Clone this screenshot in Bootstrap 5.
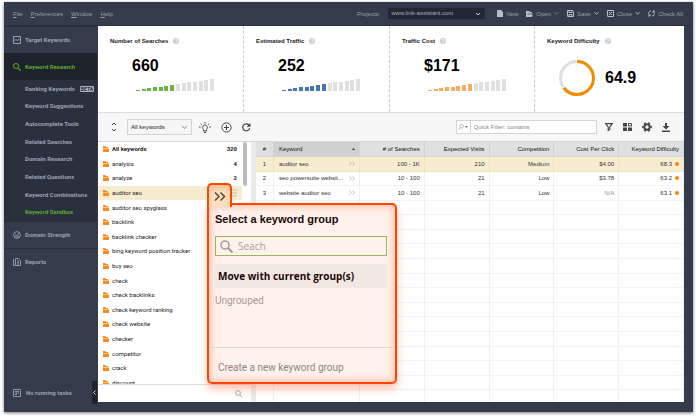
<!DOCTYPE html>
<html lang="en">
<head>
<meta charset="utf-8">
<meta name="viewport" content="width=device-width, initial-scale=1">
<title>Keyword Sandbox</title>
<link href="https://cdn.jsdelivr.net/npm/bootstrap@5.3.0/dist/css/bootstrap.min.css" rel="stylesheet">
<style>
body{background:#fff;font-family:Roboto,"Liberation Sans",sans-serif;font-size:6px;line-height:12px;color:#222}
.shell{padding:2px 3px 5px 4px}
.app-window{background:#343b4a;box-shadow:0 1px 3px #0008}
.topbar{height:24px;font-family:"Liberation Sans",sans-serif;color:#98a0ae;border-bottom:1px solid #2a303c}
.topbar a,.topbar button{color:#98a0ae}
.menus{padding-left:9px;gap:8px}
.menus a::first-letter{text-decoration:underline}
.plain{border:0;background:none;padding:0;line-height:12px;font-size:6px;display:inline-flex;align-items:center}
.project-pick{width:97px;height:11px;border:0;border-radius:0;background-color:#222733;color:#a9b0bc;font-size:6px;line-height:11px;padding:0 14px 0 3px;background-size:6px 6px;background-position:right 4px center;background-image:url("data:image/svg+xml,%3Csvg xmlns='http://www.w3.org/2000/svg' viewBox='0 0 6 6'%3E%3Cpath d='M1 2l2 2 2-2' fill='none' stroke='%23ccd'/%3E%3C/svg%3E")}
.actions{margin-left:12px;padding-right:10px}
.actions button{gap:3px}
.side{width:93px;flex:none;font-weight:700;color:#98a2b2}
.side a{color:inherit}
.side-item{height:27px;padding-left:9px;gap:4px;border-top:1px solid #292f3b}
.side-item svg,.tasks svg{width:8px;height:8px;flex:none}
.side-item.current{background:#1d222d;color:#5cab2c;border-color:#1d222d}
.side-menu{background:#2a303c;height:141px;padding-left:21px}
.side-menu .chosen{color:#5cab2c}
.beta{background:#a9b1c0;color:#2a303c;font-size:5px;line-height:6px;padding:0 1px;border-radius:1px;margin-left:5px}
.tasks{height:20px;padding-left:9px;gap:5px}
.collapse-tab{width:5px;height:23px;background:#1d222d;color:#fff}
.content-area{margin:0 9px 10px 1px;background:#fff;min-width:0}
.stats{display:grid;grid-template-columns:145fr 146fr 145fr 150fr;height:87px;border-bottom:1px solid #ddd;font-family:"Liberation Sans",sans-serif}
.stat{padding:9px 0 0 12px}
.stat+.stat{border-left:1px dashed #ccc}
.stat-title{font-weight:700;font-size:6px}
.help-dot{width:6px;height:6px;border-radius:50%;background:#ccc;color:#fff;font-size:5px;line-height:6px;text-align:center;margin-left:5px}
.figure-num{font-weight:700;font-size:16px;line-height:20px;color:#000}
.stat .figure-num{margin:9px 0 3px 22px}
.stat .ring-num{margin:0 0 0 10px}
.bars{width:78px;height:12px;margin-left:26px}
.bars i{width:4px;background:#e0e0e0}
.green .on{background:#6cb33f}.blue .on{background:#4575b6}.orange .on{background:#f6ad62}
.ring-row{padding:6px 0 0 12px}
.tools{height:29px;background:#f7f7f7;padding:0 14px 0 13px;border-bottom:1px solid #d5d5d5;font-family:"Liberation Sans",sans-serif}
.tools svg{display:block}
.group-pick{width:65px;height:16px;border:1px solid #d4d4d4;border-radius:0;font-size:6px;line-height:14px;padding:0 12px 0 3px;background-color:#f5f5f5;background-size:5px 5px;background-position:right 4px center;margin:0 7px 0 10px}
.quick{width:141px;height:14px;border:1px solid #d5d5d5;background:#fff}
.quick-kind{width:15px;border-right:1px solid #d5d5d5!important;color:#999;gap:1px;justify-content:center}
.quick input{border:0;border-radius:0;padding:0 3px;font-size:6px;line-height:12px;min-height:0}
.quick input::placeholder{color:#888}
.next-tool{margin-left:10px}
.groups{width:158px;flex:none}
.group-list{flex:1 1 0;min-height:0;overflow:hidden}
.group-grid{display:grid;grid-auto-rows:1fr;height:calc(100% + 6px);margin:0;padding:0;list-style:none}
.group-grid li{display:flex;align-items:center;padding:0 5px;gap:3px;margin-right:14px;line-height:12px}
.group-grid li b{margin-left:auto;font-weight:700}
.folder{width:6px;height:6px;flex:none}
.picked{background:#f6edd0}
.scroller{width:4px;height:44px;border-radius:2px;background:#bbb;right:9px;top:0}
.gutter{width:5px;background:#ebebeb;right:0;top:0;bottom:0}
.groups-foot{height:18px;border-top:1px solid #ddd;padding-right:13px}
.grid-area{min-width:0;overflow:hidden}
.kw{table-layout:fixed;width:100%;height:calc(100% + 3px);margin:0;font-family:"Liberation Sans",sans-serif;color:#333;border-collapse:separate;border-spacing:0}
.kw th,.kw td{padding:0 4px;line-height:12px;border-right:1px solid #f0f0f0;border-bottom:1px solid #f3f3f3;text-align:right;white-space:nowrap;overflow:hidden;vertical-align:middle}
.kw td{height:14px}
.kw thead th{height:15px;background:#e0e0e0;border-color:#d2d2d2;font-weight:400;color:#111}
.kw .c-key{text-align:left;padding-left:5px}
.kw thead .c-key{background:#d0d0d0}
.kw .c-num{text-align:center}
.kw .picked td{background:#f6edd0;border-color:#f0e4bf}
.lvl{display:inline-block;width:4px;height:4px;border-radius:50%;background:#f08a00;margin-left:3px}
.popup{left:109px;top:61px;width:190px;background:#fff1eb;border:2px solid #ff4500;border-radius:0 5px 5px 5px;box-shadow:inset 0 0 9px #ff450066,0 5px 9px #ff450055;color:#1c0808;z-index:2}
.popup-tab{left:-2px;top:-22px;width:25px;height:24px;background:#fde0bd;border:2px solid #ff4500;border-bottom:0;border-radius:5px 5px 0 0;justify-content:center;box-shadow:inset 0 4px 5px #ff450033}
.popup-main{padding:5px 8px 0 6px}
.popup-title{font:700 11px/18px "Liberation Sans",sans-serif;margin:0}
.popup-search{height:20px;border:1px solid #9ab564;margin:8px 0;padding-left:4px;gap:5px}
.popup-search input{border:0;background:none;padding:0;font:10px/16px "Open Sans",sans-serif;min-height:0}
.popup-search input::placeholder{color:#aaa09a}
.popup-band{background:#f3e7e2;font:700 10px/24px "Open Sans",sans-serif;padding-left:3px}
.popup-opt{font-size:10px;line-height:16px;color:#a49a95}
.popup-opt.first{padding:5px 0 38px}
.popup-foot{border-top:1px solid #e3d8d2;padding:12px 9px 6px}
.popup-foot .popup-opt{color:#8f857f}
</style>
</head>
<body>
<div class="shell vh-100 d-flex">
<div class="app-window flex-grow-1 d-flex flex-column">
<header class="topbar d-flex align-items-center flex-shrink-0">
  <nav class="menus d-flex"><a class="d-block text-decoration-none" href="#">File</a><a class="d-block text-decoration-none" href="#">Preferences</a><a class="d-block text-decoration-none" href="#">Window</a><a class="d-block text-decoration-none" href="#">Help</a></nav>
  <label class="ms-auto me-2" for="proj">Projects:</label>
  <select id="proj" class="form-select project-pick"><option>www.link-assistant.com</option></select>
  <div class="actions d-flex gap-2">
    <button class="plain"><svg width="6" height="7" viewBox="0 0 6 7"><path d="M0 0h4l2 2v5H0z" fill="#b8bec9"/></svg>New</button>
    <button class="plain"><svg width="7" height="6" viewBox="0 0 7 6"><path d="M0 0h3l1 1h2v1.500h1L6 6H0z" fill="#b8bec9"/><path d="M1.500 3H7" stroke="#343b4a" stroke-width=".7"/></svg>Open <svg width="5" height="3" viewBox="0 0 5 3"><path d="M.5.5l2 1.500 2-1.500" fill="none" stroke="#707887"/></svg></button>
    <button class="plain"><svg width="7" height="7" viewBox="0 0 7 7"><path d="M.5.500h5l1 1v5h-6zM2 .5v2h3v-2M2 6.500v-2h3v2" fill="none" stroke="#b8bec9"/></svg>Save <svg width="5" height="3" viewBox="0 0 5 3"><path d="M.5.5l2 1.500 2-1.500" fill="none" stroke="#b8bec9"/></svg></button>
    <button class="plain"><svg width="7" height="7" viewBox="0 0 7 7"><path d="M.5.500h6v6h-6zM2 2l3 3M5 2L2 5" fill="none" stroke="#b8bec9"/></svg>Close <svg width="5" height="3" viewBox="0 0 5 3"><path d="M.5.5l2 1.500 2-1.500" fill="none" stroke="#b8bec9"/></svg></button>
    <button class="plain"><svg width="7" height="7" viewBox="0 0 7 7"><path d="M3 1C0 1 0 5 2 6M0 6h2V4M4 6C7 6 7 2 5 1M7 1H5v2" fill="none" stroke="#b8bec9" stroke-width=".9"/></svg>Check All</button>
  </div>
</header>
<div class="d-flex flex-grow-1" style="min-height:0">
<aside class="side d-flex flex-column">
  <a href="#" class="side-item d-flex align-items-center text-decoration-none"><svg viewBox="0 0 8 8"><path d="M.5.500h7v7h-7zM1.500 4.500l1.500-1 1.500 1 2-1.500" fill="none" stroke="currentColor"/></svg>Target Keywords</a>
  <a href="#" class="side-item current d-flex align-items-center text-decoration-none"><svg viewBox="0 0 8 8"><circle cx="3" cy="3" r="2.500" fill="none" stroke="currentColor"/><path d="M5 5l2.700 2.700" stroke="currentColor" stroke-width="1.200"/></svg>Keyword Research</a>
  <nav class="side-menu d-flex flex-column justify-content-around">
    <a class="text-decoration-none d-flex align-items-center" href="#">Ranking Keywords<span class="beta">BETA</span></a><a class="text-decoration-none" href="#">Keyword Suggestions</a><a class="text-decoration-none" href="#">Autocomplete Tools</a><a class="text-decoration-none" href="#">Related Searches</a><a class="text-decoration-none" href="#">Domain Research</a><a class="text-decoration-none" href="#">Related Questions</a><a class="text-decoration-none" href="#">Keyword Combinations</a><a class="text-decoration-none chosen" href="#">Keyword Sandbox</a>
  </nav>
  <a href="#" class="side-item d-flex align-items-center text-decoration-none"><svg viewBox="0 0 8 8"><circle cx="4" cy="4" r="3.400" fill="none" stroke="currentColor" stroke-width=".9"/><path d="M2 3.500l2 1.500 2-3M2 6h4" fill="none" stroke="currentColor" stroke-width=".8"/></svg>Domain Strength</a>
  <a href="#" class="side-item d-flex align-items-center text-decoration-none"><svg viewBox="0 0 8 8"><path d="M2.500.500h3l2 2v5h-5zM.5 1v6.500H2M4 3h2M4 4.500h2M4 6h2" fill="none" stroke="currentColor" stroke-width=".9"/></svg>Reports</a>
  <div class="mt-auto mb-2 d-flex align-items-center justify-content-between">
    <div class="tasks d-flex align-items-center"><svg viewBox="0 0 8 8"><path d="M.5.500h7v7h-7zM2 2.500h4M2 4h4M2 5.500h2" fill="none" stroke="currentColor" stroke-width=".9"/></svg>No running tasks</div>
    <button class="plain collapse-tab justify-content-center" aria-label="Collapse sidebar"><svg width="3" height="5" viewBox="0 0 3 5"><path d="M2.500.5l-2 2 2 2" fill="none" stroke="#ddd"/></svg></button>
  </div>
</aside>
<main class="content-area flex-grow-1 d-flex flex-column">
  <section class="stats flex-shrink-0">
    <div class="stat"><div class="stat-title d-flex align-items-center">Number of Searches<span class="help-dot">?</span></div><div class="figure-num">660</div><div class="bars green d-flex align-items-end justify-content-between" data-on="7"></div></div>
    <div class="stat"><div class="stat-title d-flex align-items-center">Estimated Traffic<span class="help-dot">?</span></div><div class="figure-num">252</div><div class="bars blue d-flex align-items-end justify-content-between" data-on="8"></div></div>
    <div class="stat"><div class="stat-title d-flex align-items-center">Traffic Cost<span class="help-dot">?</span></div><div class="figure-num">$171</div><div class="bars orange d-flex align-items-end justify-content-between" data-on="8"></div></div>
    <div class="stat"><div class="stat-title d-flex align-items-center">Keyword Difficulty<span class="help-dot">?</span></div><div class="ring-row d-flex align-items-center"><svg width="36" height="50" viewBox="0 0 36 50"><g fill="none" stroke-width="3" transform="rotate(-90 18 25)"><circle cx="18" cy="25" r="16.500" stroke="#e0e0e0"/><circle cx="18" cy="25" r="16.500" stroke="#fff" pathLength="100" stroke-dasharray="67 33" stroke-dashoffset="1"/><circle cx="18" cy="25" r="16.500" stroke="#f08c00" pathLength="100" stroke-dasharray="64.900 35.100"/></g></svg><div class="figure-num ring-num">64.9</div></div></div>
  </section>
  <section class="tools d-flex align-items-center flex-shrink-0">
    <button class="plain" aria-label="Expand"><svg width="6" height="10" viewBox="0 0 6 10"><path d="M1 3l2-2 2 2M1 7l2 2 2-2" fill="none" stroke="#444"/></svg></button>
    <select class="form-select group-pick" aria-label="Group"><option>All keywords</option></select>
    <button class="plain" aria-label="Ideas"><svg width="12" height="11" viewBox="0 0 12 11"><path d="M4.500 7.500C3 6 3.500 3 6 3s3 3 1.500 4.500v1.500h-3zM5 10.500h2M6 0v1.500M1.800 1.800l1 1M10.200 1.800l-1 1M0 5h1.700M10.300 5H12" fill="none" stroke="#444"/></svg></button>
    <button class="plain next-tool" aria-label="Add"><svg width="11" height="11" viewBox="0 0 11 11"><circle cx="5.500" cy="5.500" r="4.600" fill="none" stroke="#444"/><path d="M5.500 3v5M3 5.500h5" stroke="#444"/></svg></button>
    <button class="plain next-tool" aria-label="Refresh"><svg width="9" height="9" viewBox="0 0 9 9"><path d="M7.700 5.200A3.500 3.500 0 1 1 7 2.100" fill="none" stroke="#444" stroke-width="1.200"/><path d="M8.500 0v3.800H4.700z" fill="#444"/></svg></button>
    <div class="quick d-flex ms-auto"><button class="plain quick-kind" aria-label="Filter type"><svg width="6" height="6" viewBox="0 0 6 6"><circle cx="3.600" cy="2.300" r="1.800" fill="none" stroke="#aaa" stroke-width=".8"/><path d="M2.300 3.700L.5 5.500" stroke="#aaa"/></svg><svg width="3" height="2" viewBox="0 0 3 2"><path d="M0 0h3L1.500 2z" fill="#777"/></svg></button><input class="form-control" aria-label="Quick filter" placeholder="Quick Filter: contains"></div>
    <button class="plain ms-2" aria-label="Filter"><svg width="8" height="8" viewBox="0 0 8 8"><path d="M.6.600h6.800L4.800 4v2.500l-1.600 1V4z" fill="none" stroke="#444" stroke-width="1.100"/></svg></button>
    <button class="plain next-tool" aria-label="Columns"><svg width="9" height="8" viewBox="0 0 9 8"><path d="M0 0h4v3.500H0zM0 4.500h4V8H0zM5 4.500h4V8H5z" fill="#444"/><path d="M5.500.500h3V3h-3z" fill="none" stroke="#444"/></svg></button>
    <button class="plain next-tool" aria-label="Settings"><svg width="10" height="10" viewBox="0 0 10 10"><circle cx="5" cy="5" r="2.700" fill="none" stroke="#444" stroke-width="2"/><circle cx="5" cy="5" r="4.200" fill="none" stroke="#444" stroke-width="1.400" pathLength="24" stroke-dasharray="2 2" stroke-dashoffset="1"/></svg></button>
    <button class="plain next-tool" aria-label="Download"><svg width="8" height="9" viewBox="0 0 8 9"><path d="M3 0h2v3h2.500L4 6.500.5 3H3zM0 7.500h8V9H0z" fill="#444"/></svg></button>
  </section>
  <div class="d-flex flex-grow-1 position-relative" style="min-height:0">
    <section class="groups d-flex flex-column position-relative">
      <div class="group-list"><ul class="group-grid" id="groups">
        <li><b class="m-0">All keywords</b><b>320</b></li><li>analysis<b>4</b></li><li>analyze<b>2</b></li>
        <li class="picked">auditor seo<svg class="ms-auto" width="9" height="8" viewBox="0 0 9 8"><path d="M0 1h9M0 4h9M0 7h9" stroke="#bdb7a5"/></svg></li>
        <li>auditor seo spyglass</li><li>backlink</li><li>backlink checker</li><li>bing keyword position tracker</li><li>buy seo</li><li>check</li><li>check backlinks</li><li>check keyword ranking</li><li>check website</li><li>checker</li><li>competitor</li><li>crack</li><li>discount</li>
      </ul></div>
      <div class="groups-foot d-flex align-items-center justify-content-end"><button class="plain" aria-label="Search groups"><svg width="8" height="8" viewBox="0 0 8 8"><circle cx="3" cy="3" r="2.400" fill="none" stroke="#aaa"/><path d="M5 5l2.500 2.500" stroke="#aaa"/></svg></button></div>
      <div class="scroller position-absolute"></div><div class="gutter position-absolute"></div>
    </section>
    <section class="grid-area flex-grow-1">
      <table class="kw">
        <colgroup><col style="width:18px"><col style="width:86px"><col><col><col><col><col></colgroup>
        <thead><tr><th class="c-num">#</th><th class="c-key"><div class="d-flex justify-content-between align-items-center">Keyword<svg width="3" height="2" viewBox="0 0 3 2"><path d="M0 2h3L1.500 0z" fill="#333"/></svg></div></th><th># of Searches</th><th>Expected Visits</th><th>Competition</th><th>Cost Per Click</th><th>Keyword Difficulty</th></tr></thead>
        <tbody id="rows">
          <tr class="picked"><td class="c-num">1</td><td class="c-key">auditor seo</td><td>100 - 1K</td><td>210</td><td>Medium</td><td>$4.00</td><td>68.3<i class="lvl"></i></td></tr>
          <tr><td class="c-num">2</td><td class="c-key">seo powersuite websit...</td><td>10 - 100</td><td>21</td><td>Low</td><td>$3.78</td><td>63.2<i class="lvl"></i></td></tr>
          <tr><td class="c-num">3</td><td class="c-key">website auditor seo</td><td>10 - 100</td><td>21</td><td>Low</td><td class="text-black-50">N/A</td><td>63.1<i class="lvl"></i></td></tr>
        </tbody>
      </table>
    </section>
    <div class="popup position-absolute">
      <button class="plain popup-tab position-absolute" aria-label="Move to group"><svg width="12" height="9" viewBox="0 0 12 9"><path d="M1 .5l4 4-4 4M6.500.5l4 4-4 4" fill="none" stroke="#5a4638" stroke-width="1.500"/></svg></button>
      <div class="popup-main">
        <h2 class="popup-title">Select a keyword group</h2>
        <div class="popup-search d-flex align-items-center"><svg class="flex-shrink-0" width="13" height="13" viewBox="0 0 13 13"><circle cx="5" cy="5" r="4" fill="none" stroke="#a39b96" stroke-width="1.500"/><path d="M8 8l4.500 4.500" stroke="#a39b96" stroke-width="2"/></svg><input class="form-control" aria-label="Search groups" placeholder="Seach"></div>
        <div class="popup-band">Move with current group(s)</div>
        <div class="popup-opt first"><button class="plain popup-opt">Ungrouped</button></div>
      </div>
      <div class="popup-foot"><button class="plain popup-opt">Create a new keyword group</button></div>
    </div>
  </div>
</main>
</div>
</div>
</div>
<script src="https://cdn.jsdelivr.net/npm/bootstrap@5.3.0/dist/js/bootstrap.bundle.min.js"></script>
<script>
document.querySelectorAll('.bars').forEach(function(el){
  for(var i=0;i<14;i++){var b=document.createElement('i');b.style.height=Math.round(1+i*11/13)+'px';if(i<+el.dataset.on)b.className='on';el.append(b);}
});
document.querySelectorAll('#groups li').forEach(function(li){
  li.insertAdjacentHTML('afterbegin','<svg class="folder" viewBox="0 0 6 6"><path d="M0 0h2.500v1H5v1H0zM0 2.500h6V6H0z" fill="#f78b1f"/></svg>');
});
document.querySelectorAll('#rows .c-key').forEach(function(td){
  td.innerHTML='<div class="d-flex justify-content-between align-items-center"><span>'+td.textContent+'</span><svg width="6" height="5" viewBox="0 0 6 5"><path d="M.5.5l2 2-2 2M3.500.5l2 2-2 2" fill="none" stroke="#aaa" stroke-width=".8"/></svg></div>';
});
for(var r=0;r<14;r++)document.getElementById('rows').insertAdjacentHTML('beforeend','<tr>'+'<td></td>'.repeat(7)+'</tr>');
</script>
</body>
</html>
